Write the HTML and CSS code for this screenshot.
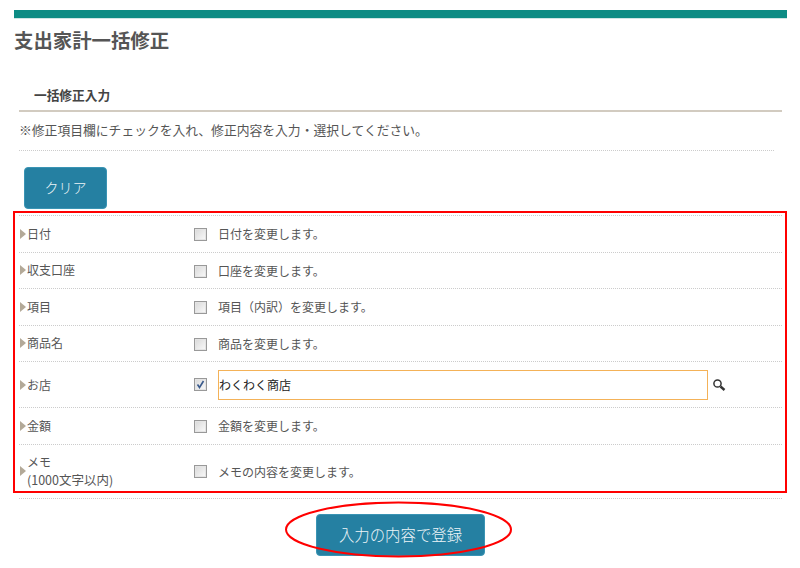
FILE: index.html
```html
<!DOCTYPE html>
<html lang="ja">
<head>
<meta charset="utf-8">
<title>支出家計一括修正</title>
<link rel="stylesheet" href="styles.css">
</head>
<body>
<div class="page">
  <div class="topbar"></div>
  <h1 class="title">支出家計一括修正</h1>
  <div class="section">
    <h2 class="subhead">一括修正入力</h2>
    <p class="note">※修正項目欄にチェックを入れ、修正内容を入力・選択してください。</p>
    <div class="clear-wrap"><button class="btn btn-clear" type="button">クリア</button></div>
    <div class="rows">
      <div class="row"><div class="label"><span class="arrow"></span><span>日付</span></div><span class="check"></span><span class="desc">日付を変更します。</span></div>
      <div class="row"><div class="label"><span class="arrow"></span><span>収支口座</span></div><span class="check"></span><span class="desc">口座を変更します。</span></div>
      <div class="row"><div class="label"><span class="arrow"></span><span>項目</span></div><span class="check"></span><span class="desc">項目（内訳）を変更します。</span></div>
      <div class="row"><div class="label"><span class="arrow"></span><span>商品名</span></div><span class="check"></span><span class="desc">商品を変更します。</span></div>
      <div class="row row-shop"><div class="label"><span class="arrow"></span><span>お店</span></div>
        <span class="check checked"><svg viewBox="0 0 9 9" width="9" height="9"><path d="M1.5 4.5 L3.5 7.5 L7.5 1" fill="none" stroke="#3a5a8c" stroke-width="1.6"/></svg></span>
        <div class="shop-input">わくわく商店</div>
        <svg class="search" viewBox="0 0 14 14" width="14" height="14"><circle cx="5.5" cy="5.5" r="3.6" fill="#fff" stroke="#333" stroke-width="1.5"/><path d="M8.5 8.5 L12.5 12" stroke="#333" stroke-width="2.4"/></svg>
      </div>
      <div class="row"><div class="label"><span class="arrow"></span><span>金額</span></div><span class="check"></span><span class="desc">金額を変更します。</span></div>
      <div class="row row-memo"><div class="label"><span class="arrow"></span><span>メモ<br><span class="limit">(1000文字以内)</span></span></div><span class="check check-memo"></span><span class="desc">メモの内容を変更します。</span></div>
    </div>
    <div class="submit-wrap"><button class="btn btn-submit" type="button">入力の内容で登録</button></div>
  </div>
  <div class="redbox"></div>
  <svg class="ellipse" width="232" height="60" viewBox="0 0 232 60"><ellipse cx="113.5" cy="28.5" rx="112.5" ry="27" fill="none" stroke="#f00" stroke-width="2"/></svg>
</div>
</body>
</html>
```
FILE: styles.css
```css
* { box-sizing: border-box; }
html, body { margin: 0; padding: 0; background: #fff; }
body { font-family: "Noto Sans CJK JP", "Liberation Sans", sans-serif; color: #555; }
.page { position: relative; width: 800px; height: 568px; overflow: hidden; padding: 10px 13px 0 14px; }
.topbar { height: 8px; background: #0d8c84; box-shadow: 0 1px 0 #cfe6e4; margin-bottom: -1px; }
.title { margin: 14px 0 0; font-size: 19.4px; line-height: 18px; height: 20px; font-weight: 700; color: #555; }
.section { padding: 0 5px 0 5px; }
.subhead { margin: 35px 0 0; padding: 0 0 7px 15px; height: 26px; font-size: 12.7px; line-height: 18px; font-weight: 700; color: #444; border-bottom: 2px solid #d2cbc0; }
.note { margin: 0 8px 0 0; height: 39px; padding-top: 9px; font-size: 12.8px; line-height: 18px; color: #555; border-bottom: 1px dotted #ccc; }
.clear-wrap { padding: 16px 0 0 5px; height: 64px; }
.btn { display: block; border: 1px solid #3a94b4; border-radius: 4px; background: #2580a2; color: #eef5f8; font-family: inherit; font-weight: 300; }
.btn-clear { width: 83px; height: 42px; font-size: 14px; padding: 0 0 3px; }
.rows { border-top: 1px dotted #ccc; }
.row { display: flex; align-items: center; height: 36.5px; border-bottom: 1px dotted #ccc; font-size: 12px; }
.row-shop { height: 46px; }
.row-memo { height: 54px; }
.label { width: 175px; display: flex; align-items: center; flex: none; line-height: 18px; color: #555; }
.limit { font-size: 12.5px; }
.arrow { width: 0; height: 0; border-left: 6px solid #b3a998; border-top: 5px solid transparent; border-bottom: 5px solid transparent; margin: 0 1px 0 1px; flex: none; }
.check { width: 13px; height: 13px; flex: none; margin-top: 2px; border: 1px solid #999; background: linear-gradient(135deg, #d8d8d8, #fafafa); box-shadow: inset 0 0 0 1px #e4e4e4; display: flex; align-items: center; justify-content: center; }
.checked, .check-memo { margin-top: 0; }
.desc { margin-left: 11px; color: #555; }
.shop-input { margin-left: 11px; width: 490px; height: 30px; border: 1px solid #f4b258; line-height: 28px; padding-left: 0; font-size: 12px; font-weight: 400; color: #222; }
.search { margin-left: 4px; }
.submit-wrap { padding-top: 15px; padding-left: 297px; }
.btn-submit { width: 169px; height: 42px; font-size: 15.4px; padding: 0 0 2px; }
.redbox { position: absolute; left: 13px; top: 211px; width: 774px; height: 282px; border: 2px solid #f00; pointer-events: none; }
.ellipse { position: absolute; left: 285px; top: 501px; pointer-events: none; }
```
